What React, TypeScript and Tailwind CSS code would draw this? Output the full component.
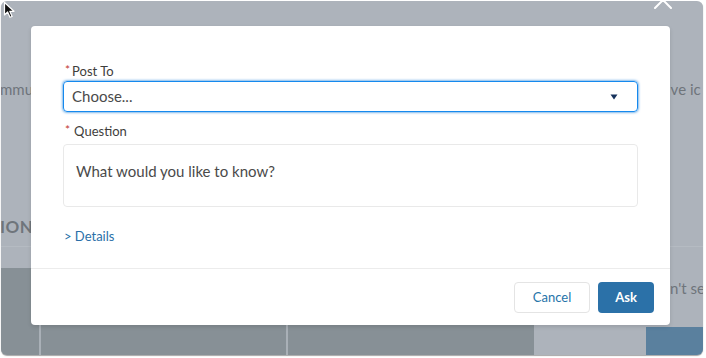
import React from 'react'

const Cursor: React.FC = () => (
  <svg className="absolute left-[3px] top-[1px]" width="14" height="18" viewBox="0 0 14 18">
    <path d="M1.5 1.5 L1.5 14 L4.6 11 L7 16.3 L9.1 15.4 L6.8 10.3 L11 10.3 Z" fill="#111" stroke="#fff" strokeWidth="1.2" strokeLinejoin="round" />
  </svg>
)

const App: React.FC = () => {
  return (
    <div className="w-[706px] h-[358px] bg-white pl-[1px] pt-[1px] font-['Lato',sans-serif] relative">
      <div className="relative w-[702px] h-[354px] rounded-[6px] overflow-hidden bg-[#adb3bb] shadow-[0_1px_1px_rgba(0,0,0,0.35)] flex flex-col">
        {/* page behind the overlay */}
        <div className="h-[267px] shrink-0 flex flex-col text-[#6f757b]">
          <div className="mt-[79px] flex items-center text-[15px] leading-[18px] whitespace-nowrap">
            <span className="w-[667px] shrink-0 -ml-[1px]">mmunity</span>
            <span className="min-w-0 overflow-hidden">ive ic</span>
          </div>
          <div className="mt-[119px] text-[17px] leading-[20px] font-bold tracking-[0.5px] -ml-[1px]">ION</div>
          <div className="mt-auto h-[22px] border-t border-[#b5bbc2]" />
        </div>
        <div className="flex-1 flex">
          <div className="w-[533px] shrink-0 bg-[#879096] flex">
            <div className="w-[40px] border-r-2 border-[#a9b0b7]" />
            <div className="w-[247px] border-r-2 border-[#a9b0b7]" />
          </div>
          <div className="w-[112px] shrink-0 bg-[#adb3bb]" />
          <div className="flex-1 min-w-0 flex flex-col">
            <div className="h-[59px] bg-[#adb3bb] pl-[24px] pt-[11px] text-[15px] leading-[18px] text-[#6f757b] whitespace-nowrap overflow-hidden">n't se</div>
            <div className="flex-1 bg-[#5a809e]" />
          </div>
        </div>

        {/* close button */}
        <svg className="absolute left-[653px] top-[-10px]" width="18" height="18" viewBox="0 0 18 18">
          <path d="M1 1 L17 17 M17 1 L1 17" stroke="#fff" strokeWidth="2" strokeLinecap="round" />
        </svg>

        {/* modal */}
        <div className="absolute left-[30px] top-[25px] w-[639px] bg-white rounded-[4px] shadow-[0_2px_4px_rgba(0,0,0,0.12)] flex flex-col">
          <div className="px-8 pt-[37px] pb-[24px] flex flex-col">
            <label className="flex items-start text-[13px] leading-[16px] text-[#3e3e3c] mb-[2px]">
              <span className="text-[#c23934] text-[12px] leading-[12px] mt-[1px] ml-[2px] mr-[2px]">*</span>
              Post To
            </label>
            <div className="h-[31px] rounded-[4px] border border-[#1589ee] shadow-[0_0_3px_#0070d2] flex items-center pl-[8px] pr-[19px]">
              <span className="text-[15px] text-[#4a4a4a]">Choose...</span>
              <svg className="ml-auto" width="8" height="6" viewBox="0 0 8 6">
                <path d="M0.5 0.5 L7.5 0.5 L4 5.5 Z" fill="#16325c" />
              </svg>
            </div>
            <label className="flex items-start text-[13px] leading-[16px] text-[#3e3e3c] mt-[11px] mb-[5px]">
              <span className="text-[#c23934] text-[12px] leading-[12px] mt-[1px] ml-[2px] mr-[4px]">*</span>
              Question
            </label>
            <div className="h-[63px] rounded-[4px] border border-[#e9e9e9] pl-[12px] pt-[14px]">
              <span className="text-[15px] leading-[18px] text-[#4a4a4a]">What would you like to know?</span>
            </div>
            <div className="mt-[21px] text-[13px] leading-[16px] text-[#2a6fa8] ml-[1px]">&gt; Details</div>
          </div>
          <div className="border-t border-[#ececec] pt-[13px] pb-[12px] pr-4 flex justify-end gap-2">
            <button className="w-[76px] h-[31px] rounded-[4px] border border-[#e4e4e4] bg-white text-[13px] text-[#2574a9]">Cancel</button>
            <button className="w-[56px] h-[31px] rounded-[4px] bg-[#2b71a8] text-[13px] font-bold text-white">Ask</button>
          </div>
        </div>
      </div>
      <Cursor />
    </div>
  )
}

export default App
